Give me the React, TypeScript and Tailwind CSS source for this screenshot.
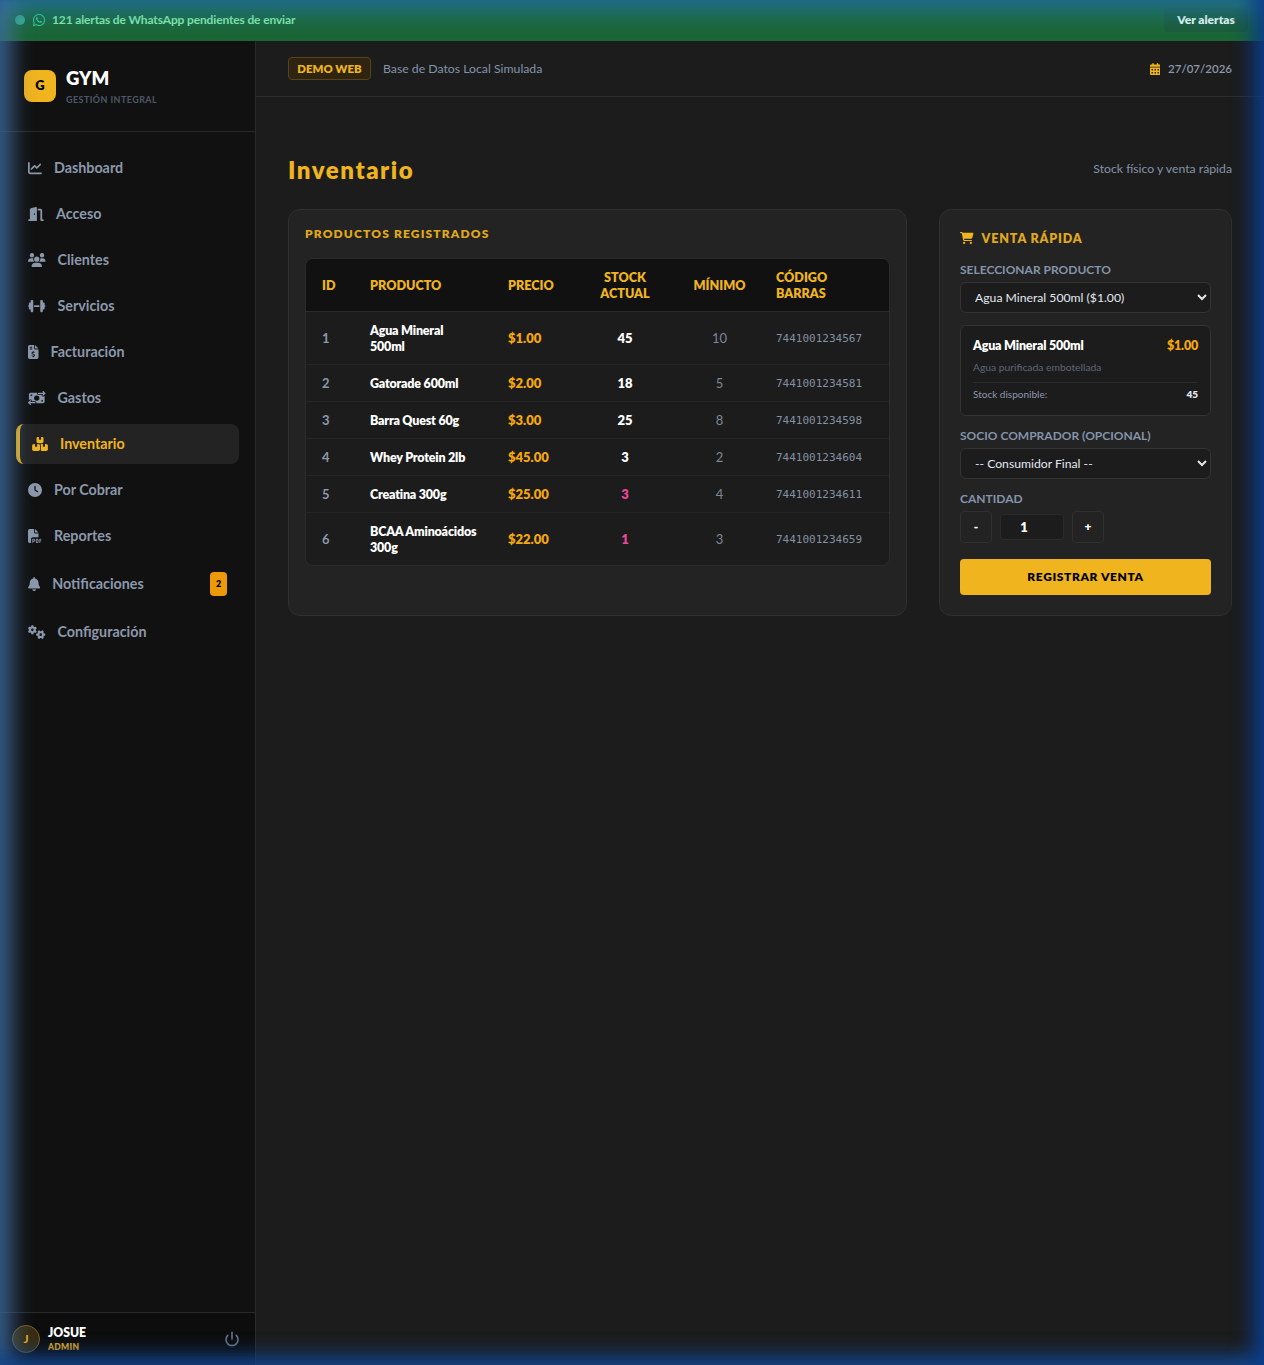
import React from "react";
import {
  FaChartLine, FaDoorOpen, FaUsers, FaDumbbell, FaFileInvoiceDollar, FaMoneyBillTransfer,
  FaBoxesStacked, FaClock, FaFilePdf, FaBell, FaGears, FaCartShopping, FaCalendarDays, FaWhatsapp,
} from "react-icons/fa6";
import { Power } from "lucide-react";

const nav = [
  { label: "Dashboard", icon: FaChartLine, w: "w-[14px]" },
  { label: "Acceso", icon: FaDoorOpen, w: "w-4" },
  { label: "Clientes", icon: FaUsers, w: "w-[17.5px]" },
  { label: "Servicios", icon: FaDumbbell, w: "w-[17.5px]" },
  { label: "Facturación", icon: FaFileInvoiceDollar, w: "w-[10.5px]" },
  { label: "Gastos", icon: FaMoneyBillTransfer, w: "w-[17.5px]" },
  { label: "Inventario", icon: FaBoxesStacked, w: "w-4", active: true },
  { label: "Por Cobrar", icon: FaClock, w: "w-[14px]" },
  { label: "Reportes", icon: FaFilePdf, w: "w-[14px]" },
  { label: "Notificaciones", icon: FaBell, w: "w-[12.25px]", badge: "2" },
  { label: "Configuración", icon: FaGears, w: "w-[17.5px]" },
];

const rows = [
  { id: 1, name: "Agua Mineral 500ml", price: "$1.00", stock: 45, min: 10, code: "7441001234567" },
  { id: 2, name: "Gatorade 600ml", price: "$2.00", stock: 18, min: 5, code: "7441001234581" },
  { id: 3, name: "Barra Quest 60g", price: "$3.00", stock: 25, min: 8, code: "7441001234598" },
  { id: 4, name: "Whey Protein 2lb", price: "$45.00", stock: 3, min: 2, code: "7441001234604" },
  { id: 5, name: "Creatina 300g", price: "$25.00", stock: 3, min: 4, code: "7441001234611", low: true },
  { id: 6, name: "BCAA Aminoácidos 300g", price: "$22.00", stock: 1, min: 3, code: "7441001234659", low: true },
];

function Sidebar() {
  return (
    <aside className="w-64 shrink-0 flex flex-col bg-[#111111] border-r border-[#2a2a2a]">
      <div className="h-[91px] shrink-0 border-b border-[#2a2a2a] pl-6 pt-[29px] flex items-start gap-2.5">
        <div className="w-8 h-8 rounded-lg bg-[#f0b41f] flex items-center justify-center text-black font-extrabold text-[13px]">G</div>
        <div>
          <div className="text-white font-extrabold text-[18.5px] leading-5 mt-[-2px] tracking-[0.1px]">GYM</div>
          <div className="text-[#4f5868] font-bold text-[9px] leading-3 mt-[6px] tracking-[0.42px]">GESTIÓN INTEGRAL</div>
        </div>
      </div>
      <nav className="flex-1 px-4 pt-4 flex flex-col gap-1.5">
        {nav.map((n) => {
          const Icon = n.icon;
          return (
            <div
              key={n.label}
              className={
                n.active
                  ? "flex items-center gap-3 pl-3 pr-3 py-2.5 rounded-lg bg-[#232323] border-l-4 border-[#f0b41f] text-[#f0b41f]"
                  : "flex items-center gap-3 px-3 py-2.5 rounded-lg text-[#8c98ab]"
              }
            >
              <Icon className={n.w + " h-[14px] shrink-0"} />
              <span className="text-[14.3px] leading-5 font-bold flex-1">{n.label}</span>
              {n.badge && (
                <span className="w-[17px] h-6 rounded bg-[#ec9a07] text-black text-[9px] font-extrabold flex items-center justify-center">{n.badge}</span>
              )}
            </div>
          );
        })}
      </nav>
      <div className="h-[53px] shrink-0 border-t border-[#2a2a2a] bg-[#0d0d0d] pl-3 pr-[15px] flex items-center gap-2">
        <div className="w-7 h-7 rounded-full bg-[#382d12] border border-[#7a6226] flex items-center justify-center text-[#f0b41f] text-[12px] font-bold">J</div>
        <div className="flex-1 mt-[-1px]">
          <div className="text-white text-[12.2px] leading-4 font-extrabold">JOSUE</div>
          <div className="text-[#e0a81c] text-[8.5px] leading-3 font-extrabold tracking-[0.3px]">ADMIN</div>
        </div>
        <Power className="w-4 h-4 text-[#66738a]" strokeWidth={2.4} />
      </div>
    </aside>
  );
}

function Table() {
  return (
    <div className="rounded-lg border border-[#2b2b2b] bg-[#1c1c1c] overflow-hidden">
      <table className="w-full table-fixed text-[13px] leading-4">
        <thead className="bg-[#111111] text-[#f0b41f] text-[12.6px]">
          <tr className="border-b border-[#2b2b2b]">
            <th className="w-12 pl-4 pt-[11px] pb-[9px] text-left font-extrabold">ID</th>
            <th className="w-[138px] pl-4 pt-[11px] pb-[9px] text-left font-extrabold">PRODUCTO</th>
            <th className="w-[79px] pl-4 pt-[11px] pb-[9px] text-left font-extrabold">PRECIO</th>
            <th className="w-[108px] px-4 pt-[11px] pb-[9px] text-center font-extrabold">STOCK ACTUAL</th>
            <th className="w-[81px] pt-[11px] pb-[9px] text-center font-extrabold">MÍNIMO</th>
            <th className="pl-4 pr-10 pt-[11px] pb-[9px] text-left font-extrabold">CÓDIGO BARRAS</th>
          </tr>
        </thead>
        <tbody>
          {rows.map((r, i) => (
            <tr key={r.id} className={i < rows.length - 1 ? "border-b border-[#262626]" : ""}>
              <td className="pl-4 py-2.5 text-[#8c98ab] font-bold">{r.id}</td>
              <td className="pl-4 pr-[13px] pt-[11px] pb-[9px] text-white font-extrabold text-[12.5px] tracking-[-0.2px]">{r.name}</td>
              <td className="pl-4 py-2.5 text-[#f5a70e] font-extrabold">{r.price}</td>
              <td className={"py-2.5 text-center font-extrabold " + (r.low ? "text-[#ec4899]" : "text-white")}>{r.stock}</td>
              <td className="py-2.5 text-center text-[#7c8799]">{r.min}</td>
              <td className="pl-4 pt-[11px] pb-[9px] text-[#8390a3] text-[11px] font-['DejaVu_Sans_Mono',monospace]">{r.code}</td>
            </tr>
          ))}
        </tbody>
      </table>
    </div>
  );
}

function Sale() {
  const label = "text-[#8494aa] text-[12px] leading-4 font-bold";
  const select =
    "w-full h-[31px] rounded-md border border-[#333333] bg-[#1c1c1c] text-[#e2e8f0] text-[12.2px] pl-[10px] [color-scheme:dark]";
  return (
    <div className="w-[293px] shrink-0 rounded-xl border border-[#2f2f2f] bg-[#232323] px-5 pt-5 pb-5">
      <div className="flex items-center gap-2 text-[#e0a81c] h-[16px]">
        <FaCartShopping className="w-[13.5px] h-3 text-[#f0b41f]" />
        <span className="text-[12.5px] leading-4 font-extrabold tracking-[0.85px] mt-px">VENTA RÁPIDA</span>
      </div>
      <div className={label + " mt-[16px]"}>SELECCIONAR PRODUCTO</div>
      <select className={select + " mt-1"} defaultValue="1">
        <option value="1">Agua Mineral 500ml ($1.00)</option>
      </select>
      <div className="mt-3 rounded-md border border-[#333333] bg-[#1c1c1c] px-3 pt-3 h-[91px]">
        <div className="flex justify-between text-[12.5px] leading-4 font-extrabold tracking-[-0.2px]">
          <span className="text-white">Agua Mineral 500ml</span>
          <span className="text-[#f5a70e]">$1.00</span>
        </div>
        <div className="text-[10.3px] leading-4 text-[#5d6779] mt-[5px]">Agua purificada embotellada</div>
        <div className="mt-[7px] border-t border-[#2b2b2b] pt-[3px] flex justify-between text-[10px] leading-4">
          <span className="text-[#8c98ab]">Stock disponible:</span>
          <span className="text-[#e2e8f0] font-extrabold">45</span>
        </div>
      </div>
      <div className={label + " mt-3"}>SOCIO COMPRADOR (OPCIONAL)</div>
      <select className={select + " mt-1"} defaultValue="0">
        <option value="0">-- Consumidor Final --</option>
      </select>
      <div className={label + " mt-3"}>CANTIDAD</div>
      <div className="mt-1 flex items-center gap-2">
        <button className="w-8 h-8 rounded border border-[#303030] text-white text-[12px] font-extrabold flex items-center justify-center">-</button>
        <input
          readOnly
          value="1"
          className="w-16 h-[26px] rounded border border-[#2b2b2b] bg-[#1c1c1c] text-white text-[13px] font-extrabold text-center pr-4 outline-none"
        />
        <button className="w-8 h-8 rounded border border-[#303030] text-white text-[12px] font-extrabold flex items-center justify-center">+</button>
      </div>
      <button className="mt-4 w-full h-9 rounded bg-[#f0b41f] text-black text-[12px] font-extrabold tracking-[0.6px]">REGISTRAR VENTA</button>
    </div>
  );
}

export default function App() {
  return (
    <div className="relative h-screen overflow-hidden flex flex-col bg-[#1c1c1c] font-['Lato','Liberation_Sans',sans-serif]">
      <div className="h-[41px] shrink-0 bg-[#1b6636] pl-[15px] pr-4 pb-px flex items-center">
        <span className="w-2.5 h-2.5 rounded-full bg-[#34b584]" />
        <FaWhatsapp className="ml-[7px] w-[14px] h-[14px] text-[#34d399]" />
        <span className="ml-[6px] text-[12px] font-bold tracking-[-0.14px] text-[#86efac]">121 alertas de WhatsApp pendientes de enviar</span>
        <button className="ml-auto w-[84px] h-6 rounded bg-[#1b5c3a] text-[#eafff2] text-[12px] font-extrabold">Ver alertas</button>
      </div>
      <div className="flex-1 flex min-h-0">
        <Sidebar />
        <main className="flex-1 min-w-0">
          <header className="h-14 border-b border-[#2e2e2e] px-8 flex items-center">
            <span className="h-[23px] w-[83px] rounded border border-[#5a4318] bg-[#2e2411] text-[#f0b41f] text-[11.4px] font-extrabold flex items-center justify-center">DEMO WEB</span>
            <span className="ml-3 text-[12.25px] text-[#8494aa] mt-px">Base de Datos Local Simulada</span>
            <div className="ml-auto flex items-center gap-2 text-[11.5px] font-semibold text-[#8c98ab]">
              <FaCalendarDays className="w-[10.5px] h-3 text-[#f0b41f]" />
              <span>27/07/2026</span>
            </div>
          </header>
          <div className="px-8 pt-[57px]">
            <div className="flex items-center justify-between h-8">
              <h1 className="text-[24px] leading-8 font-extrabold tracking-[1.55px] text-[#f0b41f]">Inventario</h1>
              <span className="text-[12.25px] text-[#8494aa] mt-[-2px]">Stock físico y venta rápida</span>
            </div>
            <div className="mt-[23px] flex gap-8">
              <div className="flex-1 min-w-0 rounded-xl border border-[#2f2f2f] bg-[#232323] px-4 pt-4">
                <div className="text-[12px] leading-4 font-extrabold tracking-[1.15px] text-[#e0a81c]">PRODUCTOS REGISTRADOS</div>
                <div className="mt-[16px]">
                  <Table />
                </div>
              </div>
              <Sale />
            </div>
          </div>
        </main>
      </div>
      <div className="absolute inset-0 pointer-events-none shadow-[inset_-20px_0_20px_-8px_rgba(10,60,140,0.9),inset_0_-20px_18px_-8px_rgba(20,70,140,0.8),inset_22px_0_20px_-8px_rgba(70,115,165,0.7),inset_0_22px_20px_-8px_rgba(40,125,185,0.6)]" />
    </div>
  );
}
